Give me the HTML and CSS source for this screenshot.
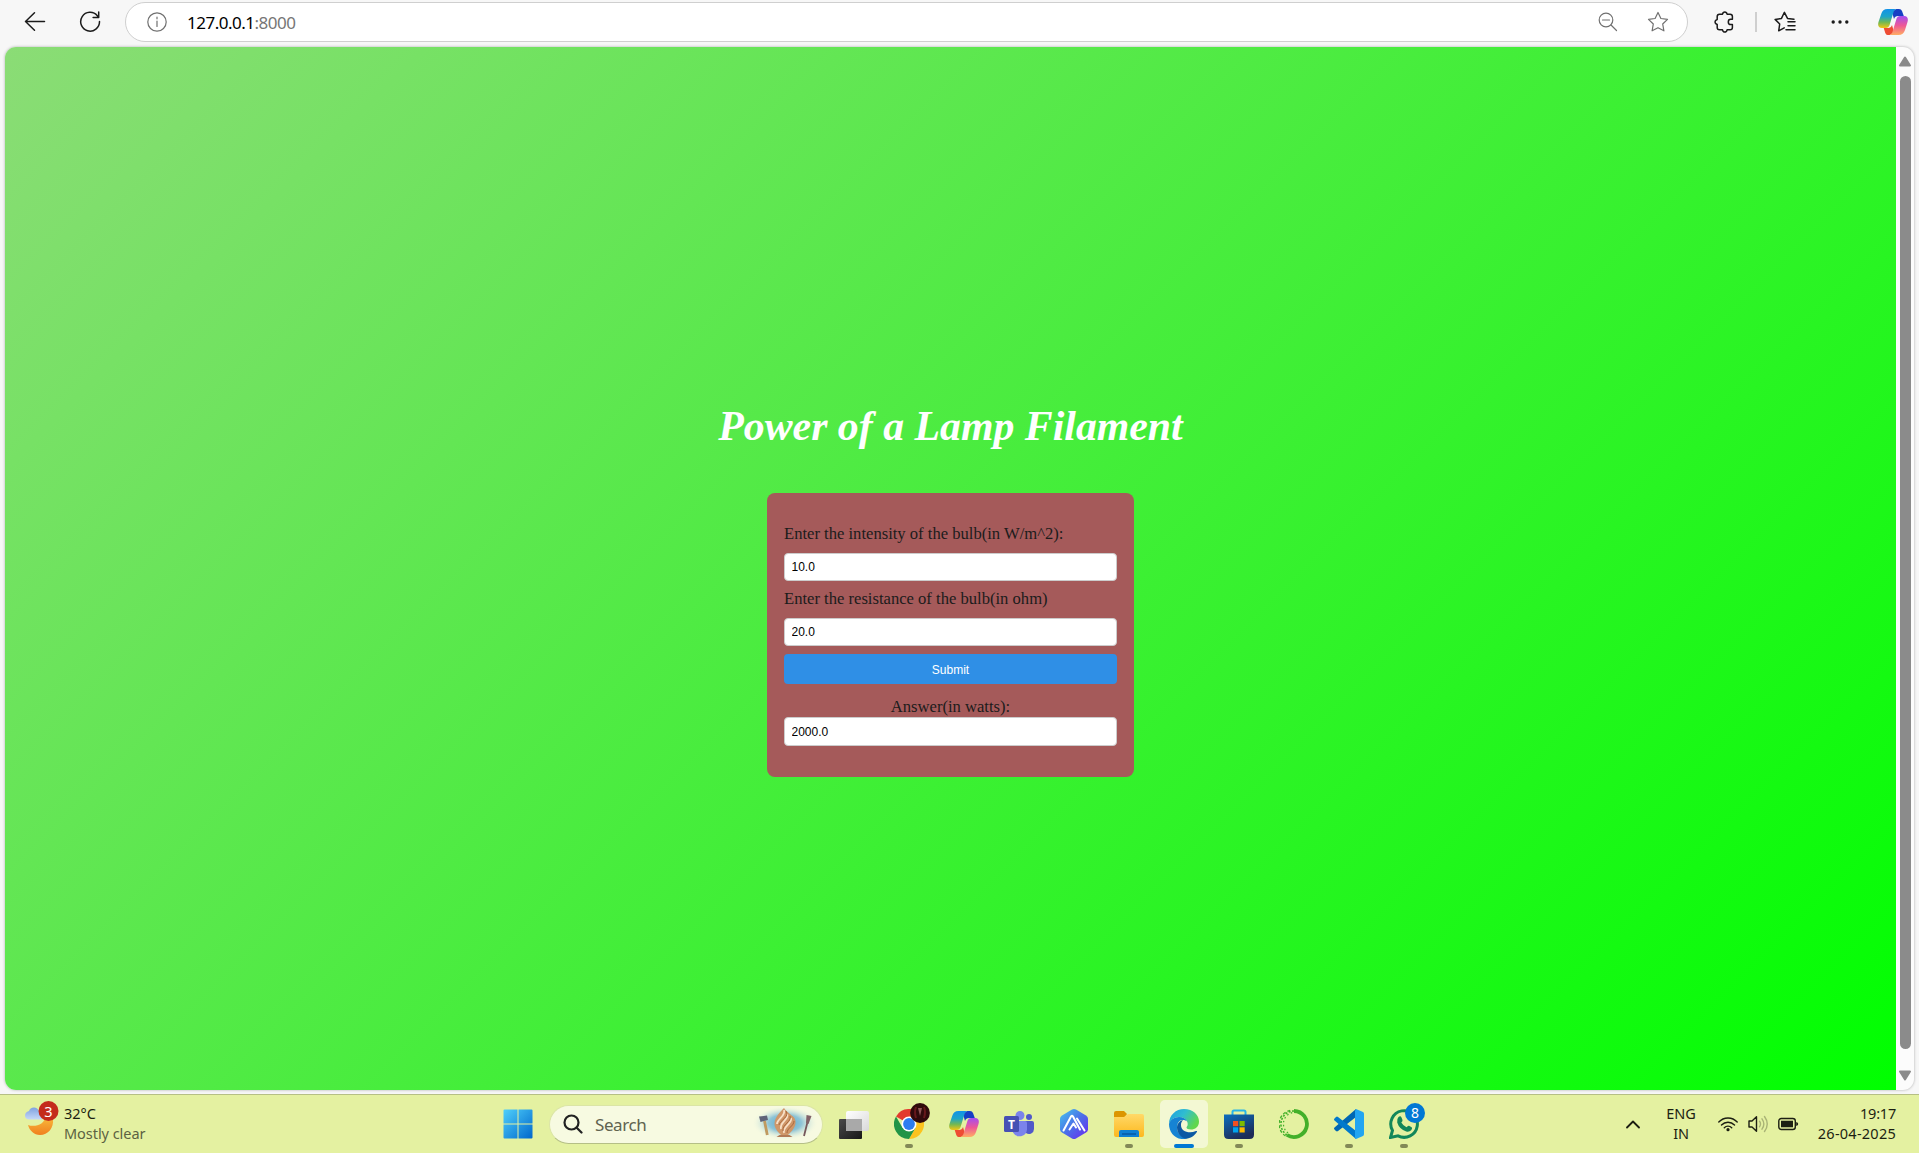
FILE: index.html
```html
<!DOCTYPE html>
<html lang="en">
<head>
<meta charset="utf-8">
<title>Power of a Lamp Filament</title>
<link rel="stylesheet" href="styles.css">
</head>
<body>
<header class="toolbar">
  <svg class="nav-back" width="22" height="22" viewBox="0 0 22 22"><path d="M20.500 10.500H1.500M10.500 1.800L1.500 10.500l9 8.700"/></svg>
  <svg class="nav-reload" width="22" height="22" viewBox="0 0 22 22"><path d="M20.500 10.500A9.400 9.400 0 1 1 18.300 4.700L19.500 6.200M19.700 1v5.400h-5.600"/></svg>
  <div class="address">
    <svg class="info" width="20" height="20" viewBox="0 0 20 20"><circle cx="10" cy="10" r="9.200"/><path d="M10 9v5.500M10 5.200v1.600"/></svg>
    <span class="url">127.0.0.1<span class="port">:8000</span></span>
    <svg class="glass" width="20" height="20" viewBox="0 0 20 20"><circle cx="8" cy="8" r="6.800"/><path d="M13 13l5.500 5.500M4.500 8h7"/></svg>
    <svg class="star" width="22" height="22" viewBox="0 0 22 22"><path d="M11 1.500l2.900 6 6.600.9-4.800 4.600 1.200 6.800-5.900-3.100-5.900 3.100 1.200-6.800L1.500 8.400l6.600-.9z"/></svg>
  </div>
  <svg class="puzzle" width="22" height="22" viewBox="0 0 22 22"><path d="M5.500 3.200h3c.3-1.500 1-2.200 2.300-2.200s2 .7 2.300 2.200h3c1.500 0 2.300.8 2.300 2.300v2.800h-1.700c-1.500 0-2.400 1.200-2.400 2.600s.9 2.600 2.400 2.600h1.700v3c0 1.500-.8 2.300-2.300 2.300h-3c-.3 1.500-1 2.200-2.300 2.200s-2-.7-2.300-2.200h-3c-1.500 0-2.300-.8-2.300-2.300v-3C1.700 12.900 1 12.200 1 10.900s.7-2 2.200-2.400v-3c0-1.500.8-2.300 2.300-2.300z"/></svg>
  <span class="divider"></span>
  <svg class="favorites" width="22" height="22" viewBox="0 0 22 22"><path d="M20 8.200l-6.500-.8L10.400 1.300 7.500 7.400l-6.400 1 4.600 4.600-1 6.800 5.500-2.900M14 10.800h7M14 14.800h7M12 18.800h9"/></svg>
  <svg class="more" width="18" height="6" viewBox="0 0 18 6"><circle cx="2.200" cy="3" r="1.700"/><circle cx="9" cy="3" r="1.700"/><circle cx="15.800" cy="3" r="1.700"/></svg>
  <svg class="copilot" width="30" height="28" viewBox="0 0 30 28"><use href="#copilot-mark"/></svg>
</header>

<div class="viewport">
  <main class="page">
    <h1>Power of a Lamp Filament</h1>
    <form class="card">
      <label for="intensity">Enter the intensity of the bulb(in W/m^2):</label>
      <input id="intensity" value="10.0">
      <label for="resistance">Enter the resistance of the bulb(in ohm)</label>
      <input id="resistance" value="20.0">
      <button type="button">Submit</button>
      <label class="answer" for="power">Answer(in watts):</label>
      <input id="power" class="result" value="2000.0">
    </form>
  </main>
  <div class="scrollbar">
    <svg width="14" height="11" viewBox="0 0 14 11"><path d="M7 1.500L12 9.500H2z"/></svg>
    <span class="thumb"></span>
    <svg width="14" height="11" viewBox="0 0 14 11"><path d="M7 9.500L12 1.500H2z"/></svg>
  </div>
</div>

<footer class="taskbar">
  <div class="weather">
    <svg width="36" height="36" viewBox="0 0 36 36">
      <path d="M4 24c7 2.500 17-.5 17.500-9L29 18c1 9-5 16-13 16-6 0-10.500-4.500-12-10z" fill="url(#moon)"/>
      <path d="M4.500 18.500q-3.500-.5-3.500-4t4-4.500q1-3.500 5-3.500 3.500 0 5 3.500h3v8.500z" fill="url(#cloud)"/>
      <circle cx="24.500" cy="10" r="10" fill="#c42b1c"/>
      <text x="24.500" y="15.500" text-anchor="middle" fill="#fff" font-size="14.500">3</text>
    </svg>
    <div class="weather-text"><span>32°C</span><span class="muted">Mostly clear</span></div>
  </div>
  <nav class="apps">
    <div class="app"><svg width="30" height="30" viewBox="0 0 30 30" fill="url(#win)"><path d="M1.500.5h13v14h-14v-13a1 1 0 0 1 1-1zM15.500.5h13a1 1 0 0 1 1 1v13h-14zM.5 15.500h14v14h-13a1 1 0 0 1-1-1zM15.500 15.500h14v13a1 1 0 0 1-1 1h-13z"/></svg></div>
    <div class="search">
      <svg class="lens" width="20" height="20" viewBox="0 0 20 20"><circle cx="8.500" cy="8.500" r="7"/><path d="M13.500 13.500l5 5"/></svg>
      <span>Search</span>
      <svg class="sculpture" width="66" height="36" viewBox="0 0 66 36">
        <ellipse cx="33" cy="17" rx="33" ry="17" fill="url(#glow)"/>
        <path d="M12.500 15l2.800 14" stroke="#c09a5f" stroke-width="2.800"/><path d="M7 10.500l8-1 1 4.500-7.500 2z" fill="#5f6378"/>
        <path d="M56.500 12l-4.500 18" stroke="#75585b" stroke-width="1.800"/><path d="M54.500 9l5 1-3 8-2.500-1z" fill="#806267"/>
        <path d="M32 2c-4 4-9 9-9.500 15-.5 5 3.500 9 6.500 12h7c4-4 8-8 7.500-14-.5-4-3.500-5-5.500-7-2-1.500-4-3-6-6z" fill="#cf9769"/>
        <path d="M32 4c2 6-7 9-7 14M35 8c3 5-8 8-6 15M39 12c2 5-9 9-7 15" fill="none" stroke="#f8dfc6" stroke-width="1.800"/>
        <path d="M34 5c4 6-6 9-7 14M38 10c2 6-8 8-7 15M42 15c0 5-7 7-7 12" fill="none" stroke="#a9673c" stroke-width="1"/>
        <path d="M24.500 31l3-2h10l3 2z" fill="#b27a55"/>
      </svg>
    </div>
    <div class="app"><svg width="32" height="32" viewBox="0 0 32 32"><rect x="1" y="11" width="23" height="20" rx="1" fill="url(#dark)"/><path d="M8 5q0-2 2-2h19q2 0 2 2v16q0 2-2 2H8z" fill="url(#pane)"/><path d="M8 11h16v12H8z" fill="#a9a9a9"/></svg></div>
    <div class="app running">
      <svg width="30" height="30" viewBox="0 0 30 30"><path d="M15 15L2 7.500A15 15 0 0 1 28 7.500z" fill="#e33b2e"/><path d="M15 7.500h13A15 15 0 0 1 15 30l6.500-11.200z" fill="#fcc31e"/><path d="M2 7.500l6.500 11.300L21.500 18.800 15 30A15 15 0 0 1 2 7.500z" fill="#219447"/><circle cx="15" cy="15" r="7.500" fill="#fff"/><circle cx="15" cy="15" r="5.900" fill="#2d7df0"/></svg>
      <svg class="badge" width="20" height="20" viewBox="0 0 20 20"><circle cx="10" cy="10" r="9.900" fill="#300a0c"/><path d="M6 4q-2 5 0 11M14 4q2 5 0 11" stroke="#66181c" stroke-width="2" fill="none"/><path d="M8 5l2 8 2-8z" fill="#8f5557"/></svg>
    </div>
    <div class="app"><svg width="30" height="28" viewBox="0 0 30 28">
      <g id="copilot-mark">
        <path d="M18 1h3q2.300 0 3 2l1.800 5H20c-2 0-3.500 1-4 3L14 4z" fill="#173fc4"/>
        <path d="M12 27H9.500q-1.500 0-2.200-2l-1.600-5H10c2 0 3.500-1 4-3l2 7z" fill="#ee4c33"/>
        <path d="M9.500 1H19c-2 0-3 1.300-3.600 3.500L11.600 17c-.7 2-1.800 3-3.800 3H4c-3.500 0-4.500-2.500-3.500-6L3.200 6C4.300 2.500 6 1 9.500 1z" fill="url(#cp-a)"/>
        <path d="M20.500 27H11c2 0 3-1.300 3.600-3.500L18.400 11c.7-2 1.800-3 3.800-3H26c3.500 0 4.500 2.500 3.500 6L27 22c-1.200 3.500-3 5-6.500 5z" fill="url(#cp-b)"/>
      </g></svg></div>
    <div class="app"><svg width="30" height="28" viewBox="0 0 30 28"><circle cx="16" cy="5.500" r="4.500" fill="#7b83eb"/><circle cx="25" cy="7" r="3" fill="#5059c9"/><path d="M20 11h8q2 0 2 2v6a5 5 0 0 1-8 4z" fill="#5059c9"/><path d="M9 11h12q2 0 2 2v6.500a7.500 7.500 0 0 1-14 3z" fill="#7b83eb"/><rect y="6" width="15" height="16" rx="1.500" fill="#4650b4"/><text x="7.500" y="18.500" text-anchor="middle" font-size="12" font-weight="700" fill="#fff">T</text></svg></div>
    <div class="app"><svg width="28" height="30" viewBox="0 0 28 30"><path d="M12 .6q2-1 4 0l10 5.800q2 1.200 2 3.400v10.400q0 2.200-2 3.400l-10 5.800q-2 1-4 0L2 23.600Q0 22.400 0 20.200V9.800Q0 7.600 2 6.400z" fill="url(#hex)"/><path d="M3.500 21.500L11 7.500q1-1.500 2 0L20 20.500M9.500 20.500l4-6 2.500 4M17 9.500l7.500 12" stroke="#fff" stroke-width="2" fill="none" stroke-linejoin="round" stroke-linecap="round"/></svg></div>
    <div class="app running"><svg width="32" height="30" viewBox="0 0 32 30"><path d="M1 4q0-2 2-2h8l3 3-3 4H1z" fill="#dc9600"/><path d="M1 8h10l4-3h14q2 0 2 2v19q0 2-2 2H3q-2 0-2-2z" fill="url(#folder)"/><path d="M6 28v-5q0-2 2-2h16q2 0 2 2v5z" fill="#0f7fd2"/><path d="M9 25h14" stroke="#0759a4" stroke-width="1.500"/></svg></div>
    <div class="app active"><svg width="30" height="30" viewBox="0 0 30 30"><path d="M0 15C0 6 7 0 15 0c9 0 15 6 15 12.500C30 18 26 20.500 22 20.500c-3 0-4.500-1-4.500-2 0-.8 1.200-1.200 1.200-3.500C18.700 11 15 8 10 8 5 8 1.500 11 0 15z" fill="url(#edge-top)"/><path d="M0 15C1 11 5 8 10 8c4 0 7 1.700 8.200 4.500-1.200-1-2.600-1.500-4.200-1.500-4 0-6 3.500-6 7.500C8 24 12 28 18 29.700 7 32 0 24 0 15z" fill="#1683d3"/><path d="M11.500 12C9 14 8 16 8 18.500 8 24 12 29 17 29.800c4.500-.3 8.500-3 11-7 .3-.7-.3-1-1-.7-7 3-15 .5-15-6.100 0-1.500.2-3 2-5z" fill="#0c59a4"/></svg></div>
    <div class="app running"><svg width="30" height="30" viewBox="0 0 30 30"><path d="M8.500 6V3q0-1.500 1.500-1.500h10q1.500 0 1.500 1.500v3" fill="none" stroke="#28b5e8" stroke-width="2"/><path d="M0 5.500h30v20q0 4.500-4.500 4.500h-21Q0 30 0 25.500z" fill="url(#store)"/><path d="M9 12h5.200v5.200H9z" fill="#f25022"/><path d="M15.500 12h5.200v5.200h-5.200z" fill="#7fba00"/><path d="M9 18.300h5.200v5.200H9z" fill="#00a4ef"/><path d="M15.500 18.300h5.200v5.200h-5.200z" fill="#ffb900"/></svg></div>
    <div class="app"><svg width="30" height="30" viewBox="0 0 30 30" fill="none" stroke="#43b02a"><path d="M15 2A13 13 0 1 1 8 26" stroke-width="3.800"/><path d="M8 26A13 13 0 0 1 15 2" stroke-width="1.600" stroke-dasharray="2 1.500"/><path d="M6.500 27A14.200 14.200 0 0 1 13 1" stroke-width="1.300" stroke-dasharray="3 2"/><path d="M9 24A11.500 11.500 0 0 1 14 3.500" stroke-width="1.200" stroke-dasharray="1.500 2.500"/></svg></div>
    <div class="app running"><svg width="30" height="30" viewBox="0 0 30 30"><path d="M22 0v8L4 22q-1 .8-2 0l-1.500-1.400q-1-1 0-2z" fill="#0067b3"/><path d="M22 30v-8L4 8q-1-.8-2 0L.5 9.400q-1 1 0 2z" fill="#0079cc"/><path d="M22 0l7 3q1 .5 1 2v20q0 1.500-1 2l-7 3q-1 0-1-2V2z" fill="#22a5f1"/></svg></div>
    <div class="app running">
      <svg width="30" height="30" viewBox="0 0 30 30"><path d="M1.500 28.500l2-7A13.300 13.300 0 1 1 9 26.800z" fill="none" stroke="#12875a" stroke-width="3"/><path d="M9.500 8q2-1.500 3 .5l1 2.500q.3 1-1.200 2.500 2 3.500 5.200 4.800 1.500-2 2.500-1.600l2.700 1.500q1 .8-.5 3-2 2-5 1.200-7-2.400-9-9-.5-3.500 1.300-5.400z" fill="#12875a"/></svg>
      <span class="badge count">8</span>
    </div>
  </nav>
  <div class="tray">
    <svg class="chevron" width="14" height="9" viewBox="0 0 14 9"><path d="M1 7.500l6-6 6 6"/></svg>
    <div class="lang"><span>ENG</span><span>IN</span></div>
    <svg class="wifi" width="20" height="16" viewBox="0 0 20 16"><path d="M.8 6a12.500 12.500 0 0 1 18.400 0M3.500 9a9 9 0 0 1 13 0M6.300 11.700a5.200 5.200 0 0 1 7.400 0"/><circle cx="10" cy="13.700" r="1.600"/></svg>
    <svg class="volume" width="20" height="18" viewBox="0 0 20 18"><path d="M1 6h3l4.500-4.200v14.400L4 12H1z"/><path class="waves" d="M11.500 6.200q2 2.800 0 5.600M14 3.800q3.700 5.200 0 10.400M16.500 1.500q5.500 7.500 0 15"/></svg>
    <svg class="battery" width="21" height="14" viewBox="0 0 21 14"><rect x=".8" y="1.500" width="16.500" height="11" rx="2.500"/><path class="level" d="M3 3.700h12v6.600H3zM18.200 5q2 .3 2 2t-2 2z"/></svg>
    <div class="clock"><span>19:17</span><span class="date">26-04-2025</span></div>
  </div>
</footer>

<svg class="defs" width="0" height="0">
  <defs>
    <linearGradient id="moon" x2="0" y2="1"><stop stop-color="#f9bd3c"/><stop offset="1" stop-color="#f0801f"/></linearGradient>
    <linearGradient id="cloud" x2="0" y2="1"><stop stop-color="#7fa2e0"/><stop offset="1" stop-color="#c5d8f8"/></linearGradient>
    <linearGradient id="win" x2="1" y2="1"><stop stop-color="#4fd0fb"/><stop offset="1" stop-color="#0067cc"/></linearGradient>
    <radialGradient id="glow"><stop stop-color="#4da6cf"/><stop offset=".5" stop-color="#8fc4d6"/><stop offset="1" stop-color="#f6fae0" stop-opacity="0"/></radialGradient>
    <linearGradient id="dark" x2="1" y2="1"><stop stop-color="#4a4a4a"/><stop offset="1" stop-color="#171717"/></linearGradient>
    <linearGradient id="pane" x2="1" y2="1"><stop stop-color="#fff"/><stop offset="1" stop-color="#d9d9d9"/></linearGradient>
    <linearGradient id="cp-a" x2="0" y2="1"><stop stop-color="#1292e8"/><stop offset=".4" stop-color="#1ea5c8"/><stop offset=".7" stop-color="#72b853"/><stop offset="1" stop-color="#f3c513"/></linearGradient>
    <linearGradient id="cp-b" x2="0" y2="1"><stop stop-color="#a44df0"/><stop offset=".5" stop-color="#ee5896"/><stop offset="1" stop-color="#ffad62"/></linearGradient>
    <linearGradient id="hex" x2="1" y2="1"><stop stop-color="#42c5ec"/><stop offset=".5" stop-color="#4b70e8"/><stop offset="1" stop-color="#6a27f0"/></linearGradient>
    <linearGradient id="folder" x2="0" y2="1"><stop stop-color="#ffd968"/><stop offset="1" stop-color="#fdb81e"/></linearGradient>
    <linearGradient id="edge-top" x2="1" y2=".5"><stop stop-color="#1b9de2"/><stop offset=".5" stop-color="#30bdd0"/><stop offset="1" stop-color="#62d74c"/></linearGradient>
    <linearGradient id="store" x2=".5" y2="1"><stop stop-color="#0a6fbe"/><stop offset="1" stop-color="#1d2b57"/></linearGradient>
  </defs>
</svg>
</body>
</html>
```
FILE: styles.css
```css
* { box-sizing: border-box; }

body {
  margin: 0;
  height: 1153px;
  display: flex;
  flex-direction: column;
  overflow: hidden;
  background: #f7f7f7;
  font-family: "Noto Sans", sans-serif;
}

svg { display: block; flex: none; }
.defs { position: absolute; }

/* Browser toolbar */
.toolbar {
  height: 47px;
  flex: none;
  display: flex;
  align-items: center;
  padding: 0 11px 3px 24px;
}
.toolbar svg { fill: none; stroke: #1b1b1b; stroke-width: 1.5; stroke-linecap: round; stroke-linejoin: round; }
.toolbar .copilot { stroke: none; margin-left: 29px; }
.toolbar .more { fill: #1b1b1b; stroke: none; margin-left: 35px; }
.nav-reload { margin-left: 33px; }
.address {
  width: 1563px;
  height: 40px;
  margin-left: 24px;
  display: flex;
  align-items: center;
  padding: 0 18px 0 21px;
  background: #fff;
  border: 1px solid #cfcfcf;
  border-radius: 20px;
}
.address svg { stroke: #707070; stroke-width: 1.2; }
.url { margin-left: 20px; font-size: 17px; letter-spacing: -0.5px; color: #000; }
.port { color: #767676; }
.glass { margin-left: auto; }
.star { margin-left: 29px; }
.puzzle { margin-left: 26px; }
.divider { width: 2px; height: 20px; margin-left: 19px; background: #cfcfcf; }
.favorites { margin-left: 17px; }

/* Web page area */
.viewport {
  height: 1043px;
  flex: none;
  margin: 0 5px;
  display: flex;
  overflow: hidden;
  border-radius: 11px;
  background: #fcfcfc;
  box-shadow: 0 0 3px rgba(0, 0, 0, 0.3);
}
.page {
  flex: 1;
  display: flex;
  flex-direction: column;
  align-items: center;
  padding-top: 355px;
  background: linear-gradient(135deg, #8bdc76, #00ff00);
  font-family: "Liberation Serif", serif;
}
h1 {
  margin: 0 0 43px;
  height: 48px;
  line-height: 48px;
  font-size: 41.8px;
  font-style: italic;
  color: #fff;
  white-space: nowrap;
}
.card {
  width: 367px;
  height: 284px;
  padding: 29px 17px 0;
  display: flex;
  flex-direction: column;
  border-radius: 8px;
  background: #a55a5a;
}
label { height: 24px; line-height: 24px; margin-bottom: 7px; font-size: 16.6px; color: #1c1c1c; white-space: nowrap; }
input, button {
  width: 100%;
  height: 28px;
  padding: 0 6.5px;
  border: 1px solid #ccc;
  border-radius: 4px;
  font-family: "Liberation Sans", sans-serif;
  font-size: 12px;
  color: #000;
  background: #fff;
}
input + label { margin-top: 6px; }
button { height: 30px; margin-top: 8px; padding-top: 2px; border: 0; color: #fff; background: #2f8fe6; }
.answer { margin: 11px 0 -2px; text-align: center; }
.result { height: 29px; }

.scrollbar { width: 18px; display: flex; flex-direction: column; align-items: center; padding: 9px 0 9px; }
.scrollbar svg { fill: #8b8b8b; stroke: #8b8b8b; stroke-width: 2; stroke-linejoin: round; }
.thumb { width: 11px; height: 973px; margin: 9px 0 auto; border-radius: 6px; background: #8b8b8b; }

/* Taskbar */
.taskbar {
  height: 59px;
  flex: none;
  margin-top: 4px;
  display: flex;
  border-top: 1px solid #b6bf85;
  background: #e4f1a1;
  font-size: 14.5px;
  color: #1c1f12;
}
.weather { width: 494px; display: flex; padding: 6px 0 0 24px; }
.weather-text { display: flex; flex-direction: column; margin-left: 4px; line-height: 20px; padding-top: 2px; }
.weather-text .muted { letter-spacing: -0.05px; color: #5c6242; }
.apps { display: flex; gap: 7px; align-items: center; }
.app { position: relative; width: 48px; height: 48px; display: flex; align-items: center; justify-content: center; border-radius: 5px; }
.app.active { background: #f3f8d3; }
.app.running::after, .app.active::after {
  content: "";
  position: absolute;
  bottom: 0;
  left: 20px;
  width: 8px;
  height: 4px;
  border-radius: 2px;
  background: #828957;
}
.app.active::after { left: 14px; width: 20px; background: #0078d4; }
.badge { position: absolute; left: 25px; top: 3px; }
.count { width: 20px; height: 20px; border-radius: 50%; background: #0078d4; color: #fff; font-size: 14px; line-height: 20px; text-align: center; }
.search {
  width: 274px;
  height: 39px;
  display: flex;
  align-items: center;
  padding: 0 4px 0 13px;
  border: 1px solid #dbe5a5;
  border-bottom-color: #b5bf86;
  border-radius: 20px;
  background: #f7fae1;
  font-size: 17px;
  letter-spacing: -0.4px;
  color: #60634f;
}
.search span { margin: 0 auto 0 12px; }
.lens { fill: none; stroke: #222; stroke-width: 2.2; stroke-linecap: round; }

.tray { flex: 1; display: flex; align-items: center; justify-content: flex-end; padding-right: 23px; line-height: 20px; }
.tray svg { fill: none; stroke: #1c1f12; stroke-width: 1.4; stroke-linecap: round; stroke-linejoin: round; }
.tray .chevron { stroke-width: 1.8; }
.lang { display: flex; flex-direction: column; align-items: center; width: 30px; margin: -2px 22px 0 26px; letter-spacing: -0.1px; }
.wifi circle, .tray .level { fill: #1c1f12; stroke: none; }
.tray .volume { margin-left: 10px; }
.tray .waves { stroke: #a9b376; }
.tray .battery { margin-left: 10px; }
.clock { width: 80px; margin: -2px 0 0 17px; display: flex; flex-direction: column; align-items: flex-end; letter-spacing: -0.2px; white-space: nowrap; }
.date { letter-spacing: 0.25px; }
```
